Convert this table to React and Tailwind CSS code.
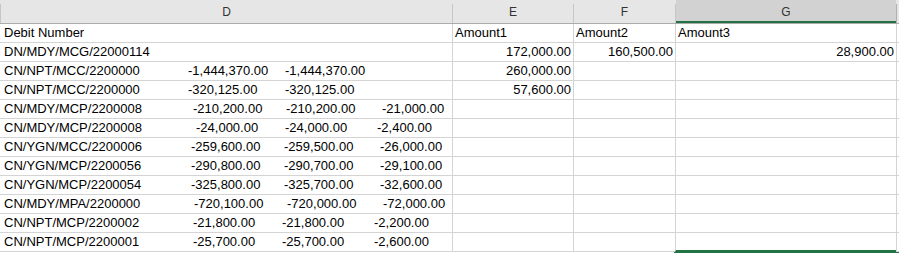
import React from 'react';

const rows = [
  { id: 'Debit Number', e: 'Amount1', f: 'Amount2', g: 'Amount3', label: true },
  { id: 'DN/MDY/MCG/22000114', e: '172,000.00', f: '160,500.00', g: '28,900.00' },
  { id: 'CN/NPT/MCC/2200000', nums: ['-1,444,370.00', '-1,444,370.00'], w: ['w-[184px]', 'w-[97px]'], e: '260,000.00' },
  { id: 'CN/NPT/MCC/2200000', nums: ['-320,125.00', '-320,125.00'], w: ['w-[184px]', 'w-[97px]'], e: '57,600.00' },
  { id: 'CN/MDY/MCP/2200008', nums: ['-210,200.00', '-210,200.00', '-21,000.00'], w: ['w-[189px]', 'w-[93px]', 'w-[96px]'] },
  { id: 'CN/MDY/MCP/2200008', nums: ['-24,000.00', '-24,000.00', '-2,400.00'], w: ['w-[192px]', 'w-[89px]', 'w-[92px]'] },
  { id: 'CN/YGN/MCC/2200006', nums: ['-259,600.00', '-259,500.00', '-26,000.00'], w: ['w-[187px]', 'w-[93px]', 'w-[96px]'] },
  { id: 'CN/YGN/MCP/2200056', nums: ['-290,800.00', '-290,700.00', '-29,100.00'], w: ['w-[187px]', 'w-[93px]', 'w-[96px]'] },
  { id: 'CN/YGN/MCP/2200054', nums: ['-325,800.00', '-325,700.00', '-32,600.00'], w: ['w-[187px]', 'w-[93px]', 'w-[96px]'] },
  { id: 'CN/MDY/MPA/2200000', nums: ['-720,100.00', '-720,000.00', '-72,000.00'], w: ['w-[190px]', 'w-[93px]', 'w-[96px]'] },
  { id: 'CN/NPT/MCP/2200002', nums: ['-21,800.00', '-21,800.00', '-2,200.00'], w: ['w-[189px]', 'w-[89px]', 'w-[92px]'] },
  { id: 'CN/NPT/MCP/2200001', nums: ['-25,700.00', '-25,700.00', '-2,600.00'], w: ['w-[189px]', 'w-[89px]', 'w-[92px]'] },
];

const Sep = ({ dark }) => (
  <div className={`w-px h-[19px] self-end ${dark ? 'bg-[#b0b0b0]' : 'bg-[#c6c6c6]'}`} />
);

export default function App() {
  return (
    <div
      className="w-[899px] h-[253px] bg-white overflow-hidden text-black"
      style={{ fontFamily: '"Liberation Sans", Arial, sans-serif' }}
    >
      {/* column headers */}
      <div className="flex h-[24px] bg-[#e6e6e6] border-b border-[#ababab] text-[12px] text-[#333]">
        <Sep />
        <div className="w-[451px] text-center leading-[23px] pt-[1px]">D</div>
        <Sep />
        <div className="w-[120px] text-center leading-[23px] pt-[1px]">E</div>
        <Sep />
        <div className="w-[101px] text-center leading-[23px] pt-[1px]">F</div>
        <Sep />
        <div className="w-[220px] h-[23px] bg-[#d2d2d2] border-b-2 border-[#217346] text-center leading-[21px] pt-[2px]">
          G
        </div>
        <Sep dark />
        <div className="w-[2px]" />
      </div>

      {/* data rows */}
      {rows.map((r, i) => {
        const last = i === rows.length - 1;
        return (
          <div key={i} className="flex h-[19px] border-b border-[#d4d4d4] text-[13px] leading-[18px]">
            <div className="w-[452px] pl-[4px] flex whitespace-nowrap">
              {r.nums ? (
                <>
                  <span className={r.w[0]}>{r.id}</span>
                  {r.nums.map((n, j) => (
                    <span key={j} className={r.w[j + 1] || ''}>
                      {n}
                    </span>
                  ))}
                </>
              ) : (
                <span>{r.id}</span>
              )}
            </div>
            <div className={`w-[121px] border-l border-[#d4d4d4] ${r.label ? 'pl-[2px]' : 'text-right pr-[2px]'}`}>
              {r.e}
            </div>
            <div className={`w-[102px] border-l border-[#d4d4d4] ${r.label ? 'pl-[2px]' : 'text-right pr-[2px]'}`}>
              {r.f}
            </div>
            <div
              className={`w-[221px] border-l border-[#d4d4d4] ${r.label ? 'pl-[2px]' : 'text-right pr-[2px]'} ${
                last ? 'border-b-2 border-b-[#217346] -mb-px' : ''
              }`}
            >
              {r.g}
            </div>
            <div className="w-[3px] border-l border-[#d4d4d4]" />
          </div>
        );
      })}

      {/* top edge of the selected cell below */}
      <div className="flex h-[1px]">
        <div className="w-[674px]" />
        <div className="w-[225px] bg-[#217346]" />
      </div>
    </div>
  );
}
